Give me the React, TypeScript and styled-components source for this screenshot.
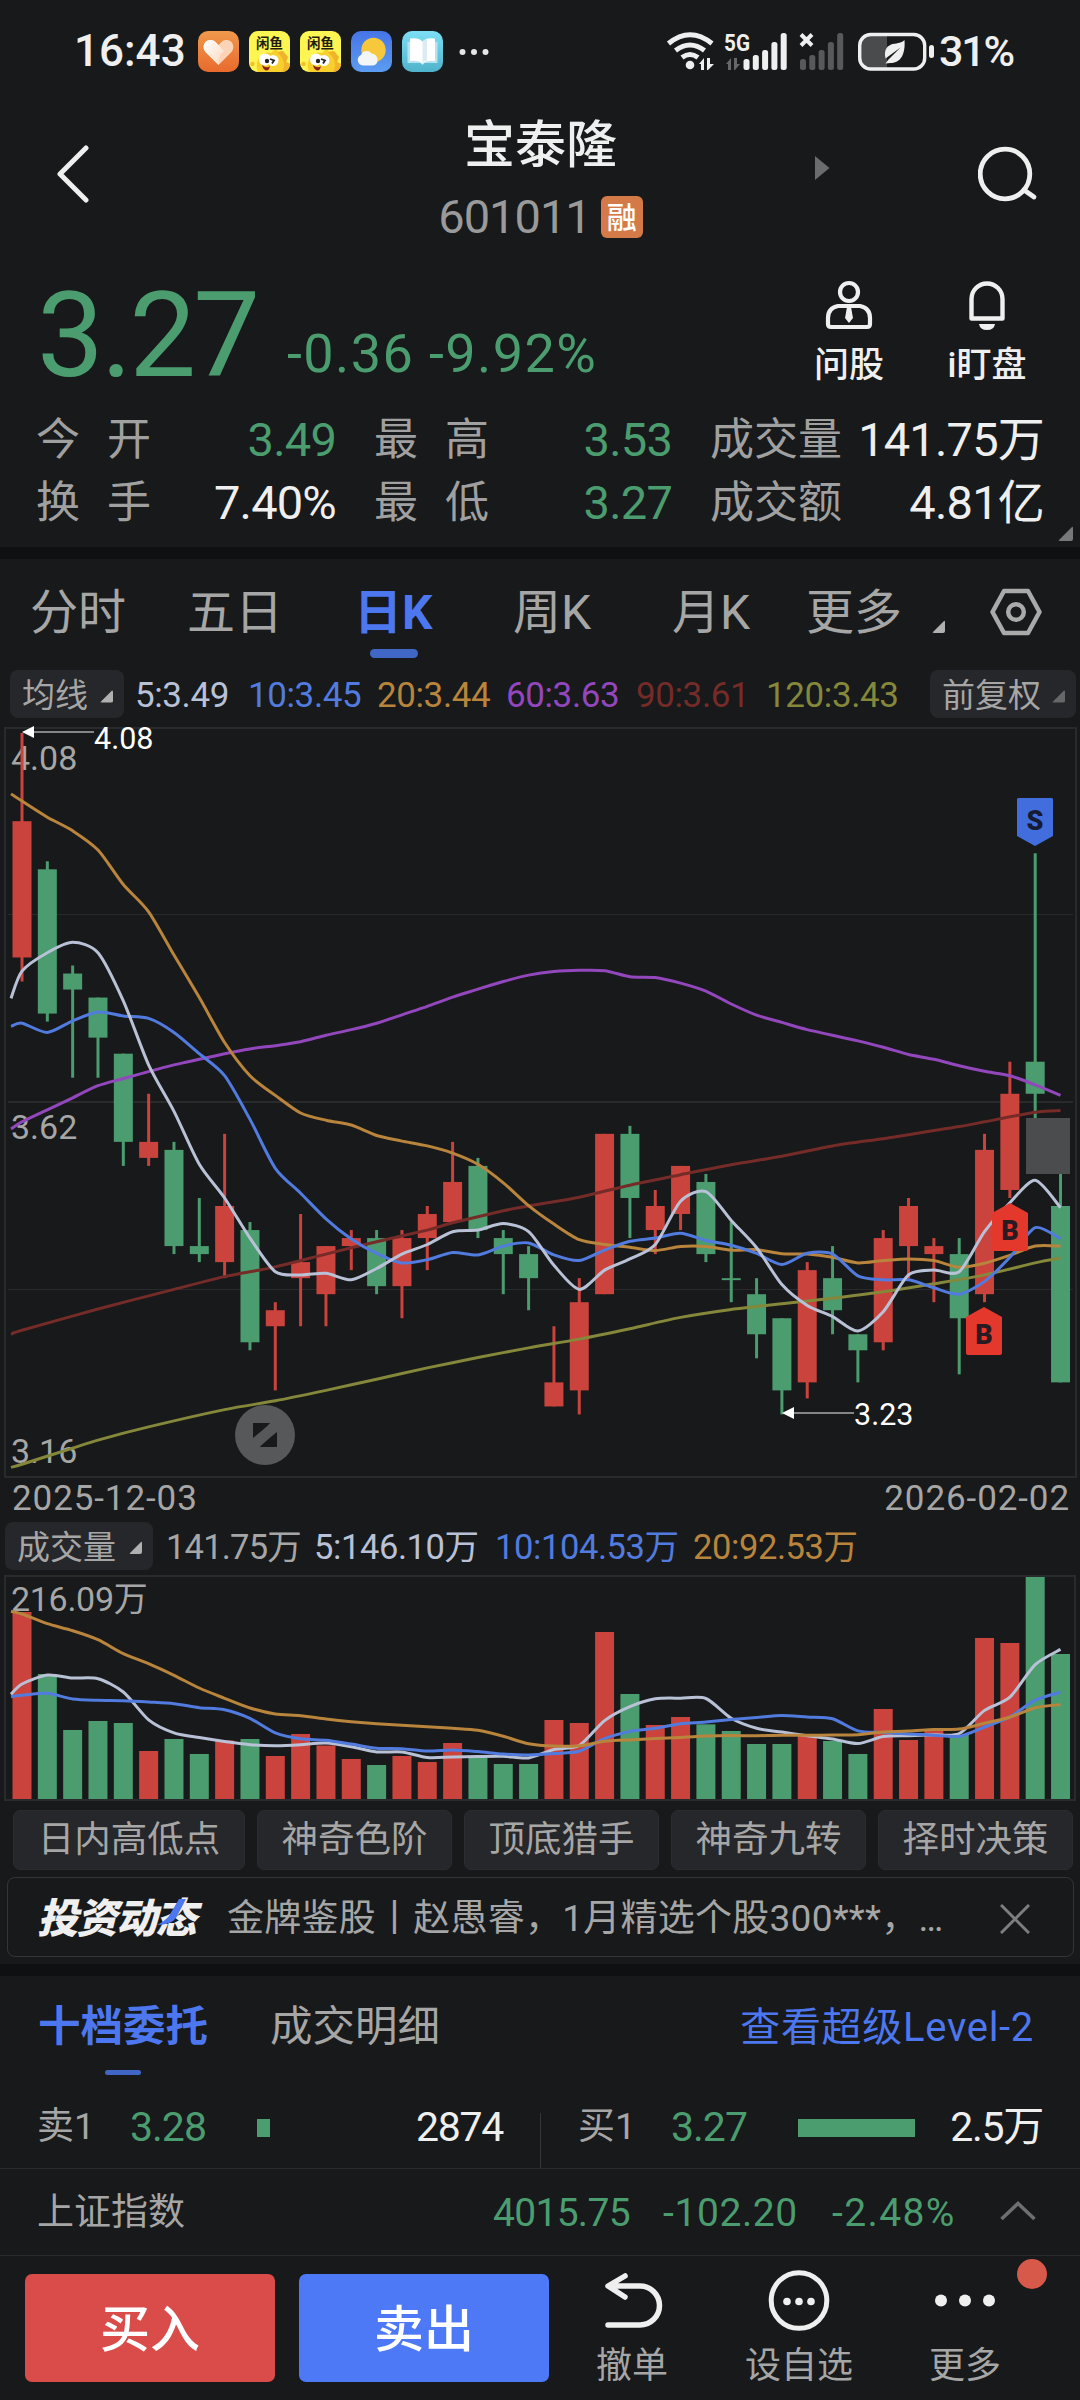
import React from 'react';
import styled, { createGlobalStyle } from 'styled-components';

const C = {
  bg: '#17191a',
  band: '#0f1011',
  chip: '#26272a',
  line: '#292a2c',
  text: '#efefef',
  dim: '#a6a6a6',
  faint: '#6e6f70',
  green: '#4b9c6f',
  red: '#cb433d',
  blue: '#4d77ee',
  ma5: '#b9c1d6',
  ma10: '#527bdf',
  ma20: '#b9843c',
  ma60: '#9347bd',
  ma90: '#752b28',
  ma120: '#85873a',
};

const Global = createGlobalStyle`
  html, body { margin: 0; background: ${C.bg}; }
  * { box-sizing: border-box; }
`;

const Page = styled.main`
  width: 1080px;
  height: 2400px;
  display: flex;
  flex-direction: column;
  overflow: hidden;
  background: ${C.bg};
  color: ${C.text};
  font-family: Roboto, 'Noto Sans CJK SC', sans-serif;
  white-space: nowrap;
`;

type TextProps = { $size: number; $color?: string; $weight?: number; $ls?: number };
const Text = styled.span<TextProps>`
  font-size: ${(p) => p.$size}px;
  line-height: 1.2;
  color: ${(p) => p.$color ?? C.text};
  font-weight: ${(p) => p.$weight ?? 400};
  letter-spacing: ${(p) => p.$ls ?? 0}px;
`;

const Band = styled.div`
  height: 12px;
  flex: none;
  background: ${C.band};
`;

/* status bar */
const StatusBar = styled.header`
  height: 100px;
  flex: none;
  display: flex;
  justify-content: space-between;
  padding: 0 67px 0 74px;
`;
const StatusGroup = styled.div<{ $gap: number }>`
  display: flex;
  align-items: center;
  height: 103px;
  gap: ${(p) => p.$gap}px;
`;
const AppIcons = styled.div`
  display: flex;
  gap: 10px;
  margin-left: 12px;
  margin-right: 16px;
`;

/* title bar */
const TitleBar = styled.div`
  height: 150px;
  flex: none;
  display: grid;
  grid-template-columns: 57px 379px 209px 1fr 102px;
  padding-top: 15px;
`;
const TitleBox = styled.div`
  display: flex;
  flex-direction: column;
  align-items: center;
`;
const CodeRow = styled.div`
  display: flex;
  align-items: center;
  gap: 10px;
  margin-top: 13px;
`;
const MarginBadge = styled.span`
  width: 42px;
  height: 42px;
  border-radius: 6px;
  background: #d47a49;
  color: #fff;
  font-size: 30px;
  font-weight: 500;
  line-height: 43px;
  text-align: center;
`;
const IconSlot = styled.div<{ $top: number; $left?: number }>`
  padding-top: ${(p) => p.$top}px;
  padding-left: ${(p) => p.$left ?? 0}px;
  line-height: 0;
`;

/* quote */
const Quote = styled.section`
  height: 297px;
  flex: none;
  position: relative;
  padding: 14px 36px 0;
`;
const PriceRow = styled.div`
  display: flex;
  height: 145px;
`;
const Price = styled(Text)`
  line-height: 144px;
  width: 251px;
  padding-left: 1px;
`;
const Change = styled(Text)`
  line-height: 180px;
  flex: 1;
`;
const QuoteAction = styled.div<{ $w: number }>`
  width: ${(p) => p.$w}px;
  display: flex;
  flex-direction: column;
  align-items: center;
  padding-top: 16px;
  gap: 15px;
`;
const StatGrid = styled.div`
  display: grid;
  grid-template-columns: 300px 298px 334px;
  column-gap: 38px;
  grid-auto-rows: 63px;
`;
const Stat = styled.div`
  display: flex;
  align-items: center;
  justify-content: space-between;
`;
const StatLabel = styled(Text)<{ $spread?: boolean }>`
  display: flex;
  justify-content: space-between;
  width: ${(p) => (p.$spread ? '115px' : 'auto')};
`;
const Corner = styled.span<{ $size: number; $color?: string }>`
  width: ${(p) => p.$size}px;
  height: ${(p) => p.$size}px;
  background: ${(p) => p.$color ?? '#b0b0b0'};
  clip-path: polygon(100% 0, 100% 100%, 0 100%);
  border-radius: 2px;
`;
const QuoteCorner = styled(Corner)`
  position: absolute;
  right: 7px;
  bottom: 6px;
`;

/* period tabs */
const PeriodTabs = styled.nav`
  height: 105px;
  flex: none;
  display: grid;
  grid-template-columns: 157px 167px 159px 159px 134px 126px 32px 1fr;
  padding-left: 30px;
  padding-top: 23px;
`;
const PeriodTab = styled.div<{ $active?: boolean }>`
  font-size: 48px;
  line-height: 62px;
  color: ${(p) => (p.$active ? C.blue : C.dim)};
  font-weight: ${(p) => (p.$active ? 700 : 400)};
`;
const TabMark = styled.div`
  width: 48px;
  height: 9px;
  border-radius: 5px;
  background: #4066c6;
  margin: 5px 0 0 16px;
`;

/* indicator rows */
const ChipBox = styled.div<{ $w: number }>`
  width: ${(p) => p.$w}px;
  height: 48px;
  border-radius: 8px;
  background: ${C.chip};
  display: flex;
  align-items: center;
  justify-content: space-between;
  padding: 4px 11px 0 12px;
`;
const MaRow = styled.div`
  height: 60px;
  flex: none;
  display: flex;
  align-items: center;
  padding: 0 4px 0 10px;
`;
const MaList = styled.div`
  flex: 1;
  display: grid;
  grid-template-columns: 113px 129px 129px 130px 130px 1fr;
  padding: 4px 0 0 11px;
`;
const DateRow = styled.div`
  height: 36px;
  flex: none;
  display: flex;
  justify-content: space-between;
  align-items: center;
  padding: 2px 10px 0 12px;
`;
const VolRow = styled.div`
  height: 59px;
  flex: none;
  display: flex;
  align-items: center;
  padding-left: 5px;
`;
const VolList = styled.div`
  display: grid;
  grid-template-columns: 148px 181px 198px auto;
  padding: 5px 0 0 13px;
`;
const Drawing = styled.svg`
  display: block;
  flex: none;
  overflow: visible;
`;

/* strategy buttons */
const Strategies = styled.div`
  height: 75px;
  flex: none;
  display: grid;
  grid-template-columns: 232px repeat(4, 195px);
  column-gap: 12px;
  padding: 8px 7px 9px 13px;
`;
const Strategy = styled.div`
  border-radius: 7px;
  border: 1px solid #2b2c2f;
  background: ${C.chip};
  color: ${C.dim};
  font-size: 36.5px;
  line-height: 58px;
  text-align: center;
`;

/* notice */
const Notice = styled.div`
  height: 80px;
  flex: none;
  margin: 0 6px 7px 7px;
  border: 1px solid #343537;
  border-radius: 8px;
  display: flex;
  align-items: center;
  padding: 3px 43px 0 29px;
`;
const NoticeLogo = styled.div`
  position: relative;
  width: 190px;
  font-size: 41px;
  font-weight: 900;
  font-style: italic;
  letter-spacing: -1.5px;
  line-height: 60px;
`;
const Swoosh = styled.svg`
  position: absolute;
  left: 119px;
  top: 10px;
`;
const NoticeText = styled(Text)`
  flex: 1;
  padding-top: 1px;
`;

/* order book */
const BookTabs = styled.div`
  height: 108px;
  flex: none;
  display: flex;
  padding: 22px 46px 0 38px;
`;
const BookTab = styled.div<{ $w: number; $active?: boolean }>`
  width: ${(p) => p.$w}px;
  font-size: 42.5px;
  line-height: 58px;
  font-weight: ${(p) => (p.$active ? 700 : 400)};
  color: ${(p) => (p.$active ? C.blue : C.dim)};
`;
const BookMark = styled.div`
  width: 36px;
  height: 5px;
  border-radius: 3px;
  background: #4066c6;
  margin: 14px 0 0 67px;
`;
const Level2 = styled(Text)`
  margin-left: auto;
  line-height: 60px;
`;
const BookRow = styled.div`
  height: 85px;
  flex: none;
  display: grid;
  grid-template-columns: 1fr 1fr;
  border-bottom: 1px solid ${C.line};
`;
const BookSide = styled.div`
  display: grid;
  grid-template-columns: 93px 127px 1fr auto;
  align-items: center;
  padding: 3px 37px 0 37px;
  border-left: 1px solid transparent;
  border-image: linear-gradient(transparent 35%, #363738 35%) 1;
  &:first-child {
    border-image: none;
    border-left: none;
  }
`;
const DepthBar = styled.div<{ $w: number }>`
  width: ${(p) => p.$w}px;
  height: 18px;
  background: ${C.green};
`;
const IndexRow = styled.div`
  height: 87px;
  flex: none;
  display: grid;
  grid-template-columns: 456px 170px 169px 168px 1fr;
  align-items: center;
  padding: 3px 0 0 37px;
  border-bottom: 1px solid ${C.line};
`;
const Expand = styled.svg`
  margin-top: -5px;
`;

/* bottom bar */
const BottomBar = styled.footer`
  height: 144px;
  flex: none;
  display: grid;
  grid-template-columns: 250px 250px 1fr;
  grid-template-rows: 108px;
  column-gap: 24px;
  padding: 18px 0 18px 25px;
`;
const TradeButton = styled.button<{ $color: string }>`
  border: 0;
  height: 108px;
  border-radius: 7px;
  background: ${(p) => p.$color};
  color: #fff;
  font-family: inherit;
  font-size: 50px;
  font-weight: 500;
  line-height: 104px;
  padding: 4px 0 0;
`;
const BottomLinks = styled.div`
  display: grid;
  grid-template-columns: 118px 216px 116px;
  margin-top: -7px;
`;
const BottomLink = styled.div`
  position: relative;
  display: flex;
  flex-direction: column;
  align-items: center;
  gap: 14px;
`;
const RedDot = styled.span`
  position: absolute;
  width: 30px;
  height: 30px;
  border-radius: 50%;
  background: #d6594a;
  right: -24px;
  top: -8px;
`;

/* chart data: [isUp, high, bodyTop, bodyBottom, low, volume]; prices are cents below 4.08 */
const CANDLES: number[][] = [
  [1, 0, 11, 28, 31, 187], [0, 16, 17, 35, 36, 125], [0, 29, 30, 32, 43, 69], [0, 33, 33, 38, 43, 78],
  [0, 40, 40, 51, 54, 76], [1, 45, 51, 53, 54, 48], [0, 51, 52, 64, 65, 60], [0, 58, 64, 65, 66, 45],
  [1, 50, 59, 66, 68, 58.5], [0, 61, 62, 76, 77, 60], [1, 71, 72, 74, 82, 43], [1, 60, 66, 68, 74, 65],
  [1, 64, 64, 70, 74, 53.5], [1, 62, 63, 64, 67, 40], [0, 62, 63, 69, 70, 34], [1, 62, 63, 69, 73, 43],
  [1, 59, 60, 63, 67, 37], [1, 51, 56, 61, 61, 56], [0, 53, 54, 62, 63, 42.5], [0, 62, 63, 65, 70, 35],
  [0, 64, 65, 68, 72, 35], [1, 74, 81, 84, 84, 79], [1, 68, 71, 82, 85, 76], [1, 50, 50, 70, 70, 167],
  [0, 49, 50, 58, 63, 105], [1, 57, 59, 62, 65, 74], [1, 54, 54, 60, 62, 82], [0, 55, 56, 65, 66, 74.7],
  [0, 61, 68, 68, 71, 68], [0, 68, 70, 75, 78, 55], [0, 73, 73, 82, 85, 55], [1, 66, 67, 81, 83, 64],
  [0, 64, 68, 72, 75, 58], [0, 75, 75, 77, 81, 45], [1, 62, 63, 76, 77, 90], [1, 58, 59, 64, 68, 59],
  [1, 63, 64, 65, 71, 69], [0, 63, 65, 73, 80, 64], [1, 50, 52, 70, 71, 161], [1, 41, 45, 57, 58, 156],
  [0, 15, 41, 45, 48.5, 222], [0, 55, 59, 81, 81, 145],
];
const cx = (i: number) => 22 + i * 25.33;
const py = (c: number) => 733 - 724 + c * 8.017;
const vy = (v: number) => 225 - v;

const average = (values: number[], n: number, head: number[]): number[][] => {
  const pts: number[][] = head.map((v, i) => [i === 0 ? 11 : cx(i - 1), v]);
  for (let i = n - 1; i < values.length; i++) {
    let s = 0;
    for (let k = 0; k < n; k++) s += values[i - k];
    pts.push([cx(i), s / n]);
  }
  return pts;
};
const sparse = (pairs: number[][]): number[][] => pairs.map(([i, v]) => [i < 0 ? 11 : cx(i), v]);

const curve = (pts: number[][], scale: (v: number) => number): string => {
  const q = pts.map(([x, v]) => [x, scale(v)]);
  let d = `M${q[0][0]} ${q[0][1].toFixed(1)}`;
  for (let i = 0; i < q.length - 1; i++) {
    const a = q[Math.max(0, i - 1)], b = q[i], c = q[i + 1], e = q[Math.min(q.length - 1, i + 2)];
    const t = 0.13;
    const n = (v: number) => v.toFixed(1);
    d += `C${n(b[0] + (c[0] - a[0]) * t)} ${n(b[1] + (c[1] - a[1]) * t)} ${n(c[0] - (e[0] - b[0]) * t)} ${n(c[1] - (e[1] - b[1]) * t)} ${n(c[0])} ${n(c[1])}`;
  }
  return d;
};

const closes = CANDLES.map((k) => (k[0] ? k[2] : k[3]));
const volumes = CANDLES.map((k) => k[5]);
const z = (t: number) => (1017 - t) / 3;

const PRICE_LINES: [string, number[][]][] = [
  [C.ma120, sparse([[-1, 91.6], [0, 91.2], [2, 89.2], [3, 88.2], [5, 86.55], [8, 84.4], [10, 83.3], [12, 82], [14, 80.6], [16, 79.2], [18, 77.9], [20, 76.7], [22, 75.6], [24, 74.3], [26, 72.9], [28, 71.9], [30, 71.2], [32, 70.5], [34, 69.7], [36, 68.7], [38, 67.6], [40, 66.1], [41, 65.5]])],
  [C.ma90, sparse([[-1, 75], [0, 74.5], [3, 71.85], [6, 69.4], [8, 67.8], [10, 66.6], [12, 65], [14, 63.45], [16, 62], [17, 61.1], [19, 59.6], [20, 59], [22, 57.9], [24, 56.4], [26, 55.1], [28, 53.85], [30, 52.8], [32, 51.5], [34, 50.6], [36, 49.6], [37, 49.1], [38, 48.5], [40, 47.3], [41, 47.1]])],
  [C.ma60, sparse([[-1, 49.4], [0, 48.5], [1, 47], [2, 45.5], [3, 44], [4, 43.1], [6, 41.4], [8, 40], [9, 39.4], [10, 39], [11, 38.5], [12, 37.7], [13, 37], [14, 36.2], [15, 35.15], [16, 34.1], [17, 32.95], [18, 31.95], [19, 31], [20, 30.2], [21, 29.75], [22, 29.6], [23, 29.65], [24, 30.4], [25, 30.5], [26, 31.2], [27, 32.2], [28, 33.8], [29, 35.2], [30, 36.1], [31, 37], [33, 38.4], [34, 39.2], [35, 40.1], [36, 40.7], [37, 41.5], [38, 42.2], [39, 42.75], [40, 43.9], [41, 45.2]])],
  [C.ma20, average(closes, 20, [7.6, 8.5, 10.5, 12.2, 14.6, 18.9, 22.3, 27.7, 33, 38.6, 42.75, 45.2, 47.4, 48.3, 48.9, 50.2, 50.9, 51.5, 52.4, 53.8])],
  [C.ma10, average(closes, 10, [36.6, 36.2, 37.35, 35.9, 34.8, 35.3, 35.6, 37.35, 40, 42.75])],
  [C.ma5, average(closes, 5, [33.1, 29.7, 27.4, 26.1, 27.4])],
];
const VOLUME_LINES: [string, number[][]][] = [
  [C.ma5, average(volumes, 5, [703, 672, 645, 654, 656].map(z))],
  [C.ma10, average(volumes, 10, [710, 706, 700, 717, 721, 722, 726, 731, 743, 749].map(z))],
  [C.ma20, average(volumes, 20, [454, 462, 491, 512, 539, 581, 611, 646, 684, 715, 744, 762, 767, 777, 785, 791, 796, 800, 805, 811].map(z))],
];

const KChart = () => (
  <Drawing width="1080" height="756" viewBox="0 0 1080 756">
    <rect x="5" y="4" width="1071" height="749" fill="none" stroke={C.line} strokeWidth="2" />
    {[190.5, 378, 565.5].map((y) => (
      <path key={y} d={`M8 ${y}H1073`} stroke={C.line} strokeWidth={y === 378 ? 2 : 1} />
    ))}
    <g fontSize="34" fill={C.dim}>
      <text x="11" y="45.5">4.08</text>
      <text x="11" y="415">3.62</text>
      <text x="11" y="739">3.16</text>
    </g>
    {CANDLES.map(([up, h, t, b, l], i) => {
      const col = up ? C.red : C.green;
      const top = py(t), bottom = Math.max(py(b), top + 2);
      return (
        <g key={i}>
          <path d={`M${cx(i)} ${py(h)}V${py(l)}`} stroke={col} strokeWidth="3" />
          <rect x={cx(i) - 9.5} y={top} width="19" height={bottom - top} fill={col} />
        </g>
      );
    })}
    {PRICE_LINES.map(([col, pts]) => (
      <path key={col} d={curve(pts, py)} fill="none" stroke={col} strokeWidth="3" />
    ))}
    <rect x="1026" y="394" width="44" height="56" fill="#4b4c4e" />
    <g stroke="#a9a9a9" strokeWidth="1.6">
      <path d="M32 8H94M792 689H854" />
    </g>
    <path d="M22 8l12 -6v12zM782 689l12 -6v12z" fill="#fff" />
    <g fontSize="30.5" fill="#fff">
      <text x="94" y="25">4.08</text>
      <text x="854" y="701">3.23</text>
    </g>
    <circle cx="265" cy="711" r="30" fill="#575859" />
    <path d="M253 699h17q-1 2 -17 15zM277 723h-17q1 -2 17 -15z" fill="#18191a" />
    <path d="M1017 75q0 -1 2 -1h32q2 0 2 1V112l-18 10 -18 -10z" fill="#426edd" />
    <path d="M992 489l18 -10 18 10v36q0 2 -2 2h-32q-2 0 -2 -2z" fill="#e5382c" />
    <path d="M966 593l18 -10 18 10v36q0 2 -2 2h-32q-2 0 -2 -2z" fill="#e5382c" />
    <g fontSize="27" fontWeight="900" fill="#2a1a22" textAnchor="middle">
      <text x="1035" y="106" fill="#151b30">S</text>
      <text x="1010" y="516">B</text>
      <text x="984" y="620">B</text>
    </g>
  </Drawing>
);

const VolumeChart = () => (
  <Drawing width="1080" height="227" viewBox="0 1 1080 227">
    <rect x="5" y="2" width="1070" height="224" fill="none" stroke={C.line} strokeWidth="2" />
    {CANDLES.map((k, i) => (
      <rect key={i} x={cx(i) - 9.5} y={vy(k[5])} width="19" height={k[5]} fill={k[0] ? C.red : C.green} />
    ))}
    <text x="11" y="37" fontSize="34" letterSpacing="-0.3" fill={C.dim}>216.09万</text>
    {VOLUME_LINES.map(([col, pts]) => (
      <path key={col} d={curve(pts, vy)} fill="none" stroke={col} strokeWidth="3" />
    ))}
  </Drawing>
);

/* icons */
const HeartApp = () => (
  <svg width="41" height="41" viewBox="0 0 41 41">
    <defs>
      <linearGradient id="ho" x1="0" y1="0" x2="0" y2="1"><stop stopColor="#f0994c" /><stop offset="1" stopColor="#e86a2d" /></linearGradient>
      <linearGradient id="hw" x1="0" y1="0" x2="1" y2="1"><stop stopColor="#fff" /><stop offset="1" stopColor="#fbd9bf" /></linearGradient>
    </defs>
    <rect width="41" height="41" rx="10" fill="url(#ho)" />
    <path d="M20.500 34L7.500 21C2 14 9.500 5.500 17 10.500L20.500 14 24 10.500C31.500 5.500 39 14 33.500 21z" fill="#fbd3b6" />
    <path d="M20.500 34L7.500 21C2 14 9.500 5.500 17 10.500L26 20 22 24z" fill="url(#hw)" />
  </svg>
);
const FishApp = () => (
  <svg width="41" height="41" viewBox="0 0 41 41">
    <rect width="41" height="41" rx="9" fill="#fdf551" />
    <path d="M9 41C5 30 12 20 22 22L27 17 29 21 34 20 34 25 39 26 37 31 41 33V34Q40 41 32 41z" fill="#f8cf2c" />
    <path d="M34 20l5 6-2 5 4 2Q40 41 33 41 39 31 28 21z" fill="#f0b32b" />
    <circle cx="16" cy="28.500" r="6" fill="#fff" />
    <circle cx="24" cy="29.500" r="5.500" fill="#fff" />
    <circle cx="18" cy="30" r="2.200" fill="#222" />
    <path d="M21 28l4 1.500-2 3" stroke="#222" strokeWidth="1.800" fill="none" />
    <path d="M13 34q5 4 8 1-1 5-4 4.500-3-1-4-5.500z" fill="#8c1f16" />
    <circle cx="3.500" cy="33" r="2.200" fill="#f6bd2c" />
    <text x="20.500" y="17" fontSize="13.500" fontWeight="700" textAnchor="middle" fill="#1e1d10" fontFamily="'Noto Sans CJK SC', sans-serif">闲鱼</text>
  </svg>
);
const WeatherApp = () => (
  <svg width="41" height="41" viewBox="0 0 41 41">
    <defs>
      <linearGradient id="wb" x1="0" y1="0" x2="0" y2="1"><stop stopColor="#4674e8" /><stop offset="1" stopColor="#5b9df0" /></linearGradient>
    </defs>
    <rect width="41" height="41" rx="10" fill="url(#wb)" />
    <circle cx="22.500" cy="19" r="12.200" fill="#f8c83c" />
    <path d="M12 34.500a5.500 5.500 0 0 1-2-10.500 6 6 0 0 1 10.500-1.500A6 6 0 0 1 26.500 29a5 5 0 0 1-4.500 5.500z" fill="#f4f5f6" />
  </svg>
);
const BookApp = () => (
  <svg width="41" height="41" viewBox="0 0 41 41">
    <defs>
      <linearGradient id="bb" x1="0" y1="0" x2="0" y2="1"><stop stopColor="#7ddff5" /><stop offset="1" stopColor="#4fb3cb" /></linearGradient>
    </defs>
    <rect width="41" height="41" rx="10" fill="url(#bb)" />
    <path d="M5.500 11h30v21h-13l-2 2-2-2h-13z" fill="#b5e4ef" />
    <path d="M8 7.500q9-1.500 12.500 3Q24 6 33 7.500V30q-9-1-12.500 3Q17 29 8 30z" fill="#fff" />
    <path d="M20.500 10.500V33Q22 29.500 25 29.500V8Q22 8.500 20.500 10.500z" fill="#dcecf2" />
  </svg>
);
const MoreDots = () => (
  <svg width="30" height="8" viewBox="0 0 30 8" fill="#e6e6e6">
    <circle cx="3.500" cy="4" r="3" /><circle cx="15" cy="4" r="3" /><circle cx="26.500" cy="4" r="3" />
  </svg>
);
const Bars = ({ color }: { color: string }) => (
  <g fill={color}>
    <rect x="0" y="26" width="6" height="11" rx="2.500" />
    <rect x="9.300" y="22" width="6" height="15" rx="2.500" />
    <rect x="18.600" y="17" width="6" height="20" rx="2.500" />
    <rect x="27.900" y="9" width="6" height="28" rx="2.500" />
    <rect x="37.200" y="0" width="6" height="37" rx="2.500" />
  </g>
);
const SignalIcons = () => (
  <Drawing width="269" height="40" viewBox="666 31 269 40">
    <g fill="none" stroke={C.text} strokeWidth="5">
      <path d="M668.500 42.500Q690 25 712 42.500" />
      <path d="M675.500 49.500Q690 38.500 704.500 49.500" />
      <path d="M682 56.500Q690 50.500 698 56.500" />
    </g>
    <circle cx="690" cy="64" r="4.300" fill={C.text} />
    <path d="M699 63l5-6v12h-3v-6zM707 57v12h1l6-6h-4v-6z" fill={C.text} />
    <path d="M726 63l5-6v12h-3v-6zM734 57v12h1l5-6h-3v-6z" fill="#666768" />
    <text x="724" y="50" fontSize="24" fontWeight="700" fill={C.text} textLength="26" lengthAdjust="spacingAndGlyphs">5G</text>
    <g transform="translate(743.500 32)"><Bars color={C.text} /></g>
    <path d="M801 33.500l11 11M812 33.500l-11 11" stroke={C.text} strokeWidth="4" />
    <g transform="translate(800 32)"><Bars color="#58595a" /></g>
    <path d="M872 34h15v34h-15a12 12 0 0 1-12-12V46a12 12 0 0 1 12-12z" fill="#4a4b4c" />
    <rect x="859.700" y="33.500" width="65" height="34.500" rx="11" fill="none" stroke={C.text} strokeWidth="3.400" />
    <rect x="929" y="44" width="5" height="13" rx="2.500" fill={C.text} />
    <path d="M904.500 39c1 13-3 23-14 23l-5 .5 3-4 12-12-15 11c-2-9 2-13 7-14.500 6-1 9-1 12-4z" fill={C.text} />
  </Drawing>
);
const Hexagon = () => (
  <svg width="52" height="50" viewBox="0 0 52 50" fill="none" stroke="#aaa" strokeWidth="4.500" strokeLinejoin="round">
    <path d="M14 4h24l11.500 21L38 46H14L2.500 25z" />
    <circle cx="26" cy="25" r="7.800" />
  </svg>
);
const AskIcon = () => (
  <svg width="48" height="50" viewBox="0 0 48 50" fill="none" stroke={C.text} strokeWidth="4.200">
    <circle cx="24" cy="12" r="9" />
    <path d="M13 26h22q10 2 10 12v6q0 3-3 3H6q-3 0-3-3v-6q0-10 10-12z" />
    <path d="M22 27h4l2 11-4 5-4-5z" fill={C.text} stroke="none" />
  </svg>
);
const BellIcon = () => (
  <svg width="40" height="50" viewBox="0 0 40 50">
    <path d="M4.500 38.500V19a15.500 15.500 0 0 1 31 0v19.500z" fill="none" stroke={C.text} strokeWidth="4.400" strokeLinejoin="round" />
    <path d="M12 44h16q-1 6-8 6t-8-6z" fill={C.text} />
  </svg>
);

const Stats: [string, boolean, string, string][] = [
  ['今开', true, '3.49', C.green],
  ['最高', true, '3.53', C.green],
  ['成交量', false, '141.75万', C.text],
  ['换手', true, '7.40%', C.text],
  ['最低', true, '3.27', C.green],
  ['成交额', false, '4.81亿', C.text],
];
const PriceMas: [string, string][] = [
  ['5:3.49', C.ma5], ['10:3.45', C.ma10], ['20:3.44', C.ma20], ['60:3.63', C.ma60], ['90:3.61', C.ma90], ['120:3.43', C.ma120],
];
const VolumeMas: [string, string][] = [
  ['141.75万', C.dim], ['5:146.10万', C.ma5], ['10:104.53万', C.ma10], ['20:92.53万', C.ma20],
];

export default function App() {
  return (
    <Page>
      <Global />
      <StatusBar>
        <StatusGroup $gap={0}>
          <Text $size={44} $weight={500}>16:43</Text>
          <AppIcons><HeartApp /><FishApp /><FishApp /><WeatherApp /><BookApp /></AppIcons>
          <MoreDots />
        </StatusGroup>
        <StatusGroup $gap={4}>
          <SignalIcons />
          <Text $size={43} $weight={500} $ls={-2.2}>31%</Text>
        </StatusGroup>
      </StatusBar>

      <TitleBar>
        <span />
        <IconSlot $top={28}>
          <svg width="34" height="62" viewBox="0 0 34 62" fill="none" stroke={C.text} strokeWidth="5" strokeLinecap="round" strokeLinejoin="round">
            <path d="M29 5L3 31l26 26" />
          </svg>
        </IconSlot>
        <TitleBox>
          <Text $size={51} $weight={500}>宝泰隆</Text>
          <CodeRow>
            <Text $size={47} $color="#9a9a9a" $ls={-1}>601011</Text>
            <MarginBadge>融</MarginBadge>
          </CodeRow>
        </TitleBox>
        <IconSlot $top={41} $left={170}>
          <svg width="15" height="24" viewBox="0 0 15 24"><path d="M0 0l14.500 12L0 24z" fill="#6b6c6d" /></svg>
        </IconSlot>
        <IconSlot $top={29}>
          <svg width="62" height="60" viewBox="0 0 62 60" fill="none" stroke={C.text} strokeWidth="4.800">
            <circle cx="27" cy="30" r="24.800" />
            <path d="M46 46l10 7" strokeLinecap="round" />
          </svg>
        </IconSlot>
      </TitleBar>

      <Quote>
        <PriceRow>
          <Price $size={119} $color={C.green} $ls={-3}>3.27</Price>
          <Change $size={54} $color={C.green} $ls={1.4}>-0.36 -9.92%</Change>
          <QuoteAction $w={162}><AskIcon /><Text $size={35} $weight={500}>问股</Text></QuoteAction>
          <QuoteAction $w={114}><BellIcon /><Text $size={35} $weight={500}>i盯盘</Text></QuoteAction>
        </PriceRow>
        <StatGrid>
          {Stats.map(([label, spread, value, color]) => (
            <Stat key={label}>
              <StatLabel $size={44} $color="#a0a0a0" $spread={spread}>
                {spread ? label.split('').map((ch) => <span key={ch}>{ch}</span>) : label}
              </StatLabel>
              <Text $size={47} $color={color} $ls={-0.8}>{value}</Text>
            </Stat>
          ))}
        </StatGrid>
        <QuoteCorner $size={15} $color="#77787a" />
      </Quote>
      <Band />

      <PeriodTabs>
        <PeriodTab>分时</PeriodTab>
        <PeriodTab>五日</PeriodTab>
        <PeriodTab $active>日K<TabMark /></PeriodTab>
        <PeriodTab>周K</PeriodTab>
        <PeriodTab>月K</PeriodTab>
        <PeriodTab>更多</PeriodTab>
        <IconSlot $top={38}><Corner as="div" $size={13} /></IconSlot>
        <IconSlot $top={5} $left={26}><Hexagon /></IconSlot>
      </PeriodTabs>

      <MaRow>
        <ChipBox $w={114}><Text $size={33} $color={C.dim}>均线</Text><Corner $size={13} /></ChipBox>
        <MaList>
          {PriceMas.map(([t, c]) => <Text key={t} $size={35} $color={c} $ls={-0.4}>{t}</Text>)}
        </MaList>
        <ChipBox $w={146}><Text $size={33} $color={C.dim}>前复权</Text><Corner $size={13} $color="#666769" /></ChipBox>
      </MaRow>
      <KChart />
      <DateRow>
        <Text $size={35} $color={C.dim} $ls={0.9}>2025-12-03</Text>
        <Text $size={35} $color={C.dim} $ls={0.9}>2026-02-02</Text>
      </DateRow>
      <VolRow>
        <ChipBox $w={148}><Text $size={33} $color={C.dim}>成交量</Text><Corner $size={13} /></ChipBox>
        <VolList>
          {VolumeMas.map(([t, c], i) => <Text key={t} $size={34.5} $color={c} $ls={i === 0 ? -0.8 : -0.4}>{t}</Text>)}
        </VolList>
      </VolRow>
      <VolumeChart />

      <Strategies>
        {['日内高低点', '神奇色阶', '顶底猎手', '神奇九转', '择时决策'].map((s) => <Strategy key={s}>{s}</Strategy>)}
      </Strategies>

      <Notice>
        <NoticeLogo>
          投资动态
          <Swoosh width="32" height="28" viewBox="0 0 32 28"><path d="M23 0h7L20 19Q15 26 1 26 9 22 13 17z" fill={C.blue} /></Swoosh>
        </NoticeLogo>
        <NoticeText $size={37} $color={C.dim} $ls={0.25}>金牌鉴股丨赵愚睿，1月精选个股300***，…</NoticeText>
        <svg width="30" height="30" viewBox="0 0 30 30" stroke="#7d7e7f" strokeWidth="3"><path d="M1 1l28 28M29 1L1 29" /></svg>
      </Notice>
      <Band />

      <BookTabs>
        <BookTab $w={232} $active>十档委托<BookMark /></BookTab>
        <BookTab $w={180}>成交明细</BookTab>
        <Level2 $size={40} $color={C.blue} $ls={0.7}>查看超级Level-2</Level2>
      </BookTabs>
      <BookRow>
        <BookSide>
          <Text $size={37} $color={C.dim}>卖1</Text>
          <Text $size={41} $color={C.green} $ls={-1}>3.28</Text>
          <DepthBar $w={13} />
          <Text $size={41} $ls={-1.3}>2874</Text>
        </BookSide>
        <BookSide>
          <Text $size={37} $color={C.dim}>买1</Text>
          <Text $size={41} $color={C.green} $ls={-1}>3.27</Text>
          <DepthBar $w={117} />
          <Text $size={41} $ls={-1.3}>2.5万</Text>
        </BookSide>
      </BookRow>
      <IndexRow>
        <Text $size={37} $color={C.dim}>上证指数</Text>
        <Text $size={39} $color={C.green} $ls={-0.7}>4015.75</Text>
        <Text $size={39} $color={C.green} $ls={0.6}>-102.20</Text>
        <Text $size={39} $color={C.green} $ls={1.4}>-2.48%</Text>
        <Expand width="36" height="20" viewBox="0 0 36 20" fill="none" stroke={C.faint} strokeWidth="3.500"><path d="M1.500 18L18 2.500 34.500 18" /></Expand>
      </IndexRow>

      <BottomBar>
        <TradeButton $color="#d94c49">买入</TradeButton>
        <TradeButton $color="#4d78f6">卖出</TradeButton>
        <BottomLinks>
          <BottomLink>
            <svg width="62" height="64" viewBox="0 0 62 64" fill="none" stroke={C.text} strokeWidth="5.500" strokeLinecap="round" strokeLinejoin="round">
              <path d="M24 9L7 19l17 11M8 19h31a19.500 19.500 0 0 1 0 39H7" />
            </svg>
            <Text $size={36} $color={C.dim}>撤单</Text>
          </BottomLink>
          <BottomLink>
            <svg width="62" height="64" viewBox="0 0 62 64">
              <circle cx="31" cy="33.500" r="27.800" fill="none" stroke={C.text} strokeWidth="5" />
              <g fill={C.text}><circle cx="19" cy="34.500" r="3.800" /><circle cx="31" cy="34.500" r="3.800" /><circle cx="43" cy="34.500" r="3.800" /></g>
            </svg>
            <Text $size={36} $color={C.dim}>设自选</Text>
          </BottomLink>
          <BottomLink>
            <svg width="62" height="64" viewBox="0 0 62 64" fill={C.text}>
              <circle cx="7" cy="33.500" r="6" /><circle cx="31" cy="33.500" r="6" /><circle cx="55" cy="33.500" r="6" />
            </svg>
            <Text $size={36} $color={C.dim}>更多</Text>
            <RedDot />
          </BottomLink>
        </BottomLinks>
      </BottomBar>
    </Page>
  );
}
